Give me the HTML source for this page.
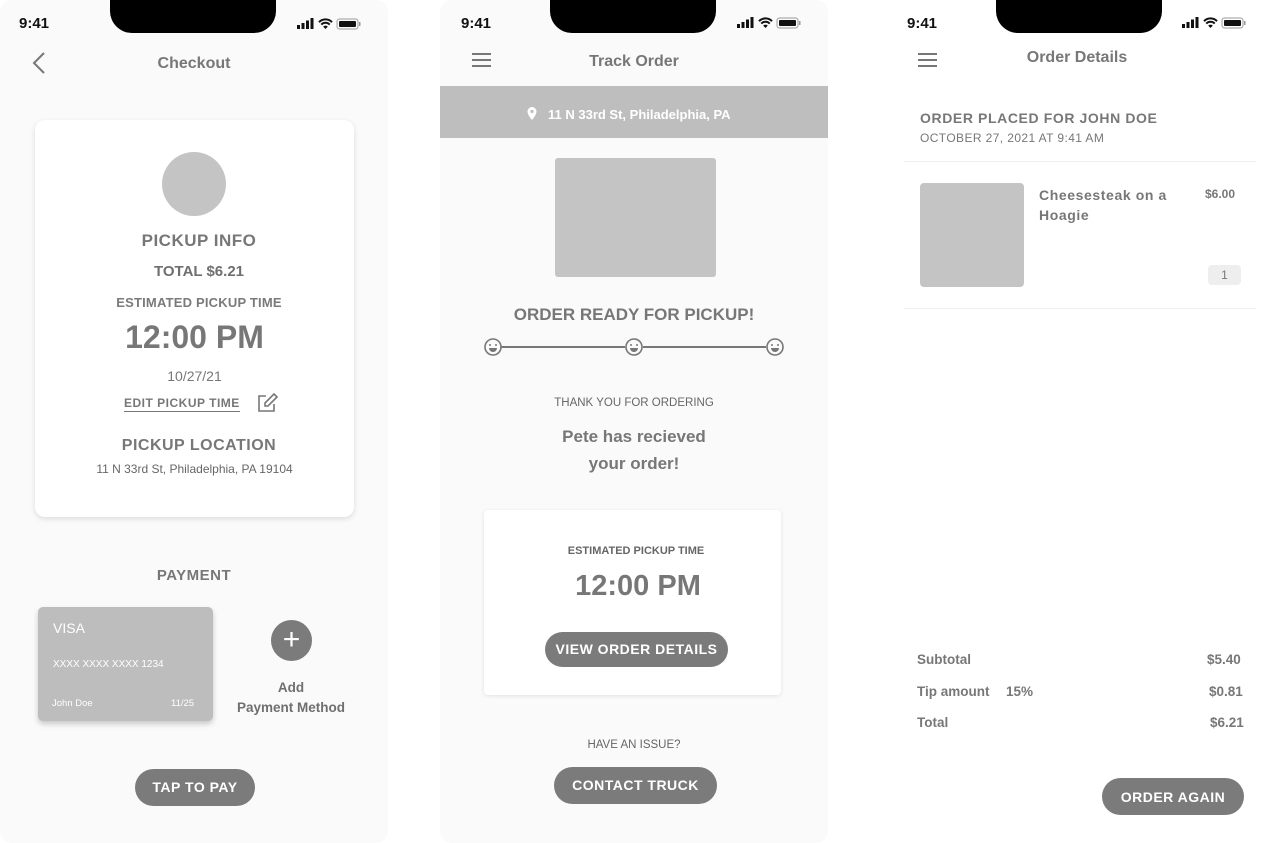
<!DOCTYPE html>
<html><head><meta charset="utf-8"><style>
*{margin:0;padding:0;box-sizing:border-box}
body{width:1274px;height:843px;background:#fff;position:relative;overflow:hidden;font-family:"Liberation Sans",sans-serif;color:#777}
.a{position:absolute}
.c{position:absolute;text-align:center;white-space:nowrap}
.b{font-weight:bold}
.ph{position:absolute;top:0;width:388px;height:843px;border-radius:12px}
.notch{position:absolute;top:0;width:166px;height:33px;background:#000;border-radius:0 0 22px 22px}
.time{position:absolute;top:15px;font-size:15px;font-weight:bold;color:#111}
.btn{position:absolute;background:#7b7b7b;color:#fff;font-weight:bold;border-radius:20px;text-align:center;letter-spacing:.5px}
.ham{position:absolute;width:19px;height:14px;border-top:2px solid #777;border-bottom:2px solid #777}
.ham:after{content:"";position:absolute;left:0;right:0;top:4px;border-top:2px solid #777}
</style></head><body>

<svg width="0" height="0" style="position:absolute"><defs>
<g id="st"><rect x="0" y="7" width="3" height="4" fill="#111"/><rect x="4.5" y="5" width="3" height="6" fill="#111"/><rect x="9" y="2.5" width="3" height="8.5" fill="#111"/><rect x="13.5" y="0" width="3" height="11" fill="#111"/>
<path d="M22 4.2a9 9 0 0 1 13 0M24.3 6.6a5.6 5.6 0 0 1 8.4 0" stroke="#111" stroke-width="2" fill="none"/><path d="M28.5 11l-2.3-2.4a3.2 3.2 0 0 1 4.6 0z" fill="#111"/>
<rect x="40" y="1" width="21" height="10" rx="2.5" stroke="#999" fill="none"/><rect x="42" y="3" width="17" height="6" rx="1" fill="#111"/><rect x="62" y="4" width="1.5" height="4" fill="#999"/></g>
</defs></svg>

<!-- PHONE 1 -->
<div class="ph" style="left:0;background:#fafafa"></div>
<div class="notch" style="left:110px"></div>
<div class="time" style="left:19px">9:41</div>
<svg class="a" style="left:297px;top:18px" width="66" height="12"><use href="#st"/></svg>
<svg class="a" style="left:30px;top:51px" width="16" height="24"><path d="M14 2L4 12l10 10" stroke="#777" stroke-width="2" fill="none"/></svg>
<div class="c b" style="left:0;width:388px;top:55px;font-size:16px">Checkout</div>
<div class="a" style="left:35px;top:120px;width:319px;height:397px;background:#fff;border-radius:10px;box-shadow:0 2px 6px rgba(0,0,0,.12)"></div>
<div class="a" style="left:162px;top:152px;width:64px;height:64px;border-radius:50%;background:#c4c4c4"></div>
<div class="c b" style="left:35px;width:328px;top:231px;font-size:17px;letter-spacing:.5px">PICKUP INFO</div>
<div class="c b" style="left:35px;width:328px;top:263px;font-size:15px;color:#6f6f6f">TOTAL $6.21</div>
<div class="c b" style="left:35px;width:328px;top:295px;font-size:13px;letter-spacing:.2px;color:#7a7a7a">ESTIMATED PICKUP TIME</div>
<div class="c b" style="left:35px;width:319px;top:319px;font-size:32px">12:00 PM</div>
<div class="c" style="left:35px;width:319px;top:368px;font-size:14px">10/27/21</div>
<div class="a b" style="left:124px;top:396px;font-size:12px;letter-spacing:.5px;border-bottom:1.5px solid #777;padding-bottom:1px">EDIT PICKUP TIME</div>
<svg class="a" style="left:256px;top:393px" width="22" height="20"><path d="M10 3H3v15h15v-7" stroke="#777" stroke-width="1.6" fill="none"/><path d="M9 13v-3l9-9 3 3-9 9z" stroke="#777" stroke-width="1.6" fill="none"/></svg>
<div class="c b" style="left:35px;width:328px;top:437px;font-size:16px;letter-spacing:.5px">PICKUP LOCATION</div>
<div class="c" style="left:35px;width:319px;top:462px;font-size:12px;color:#666">11 N 33rd St, Philadelphia, PA 19104</div>
<div class="c b" style="left:0;width:388px;top:567px;font-size:15px;letter-spacing:.5px">PAYMENT</div>
<div class="a" style="left:38px;top:607px;width:175px;height:114px;background:#bdbdbd;border-radius:5px;box-shadow:0 3px 6px rgba(0,0,0,.2)"></div>
<div class="a" style="left:53px;top:620px;color:#fff;font-size:14px">VISA</div>
<div class="a" style="left:53px;top:659px;color:#fff;font-size:10px">XXXX XXXX XXXX 1234</div>
<div class="a" style="left:52px;top:698px;color:#fff;font-size:9.5px">John Doe</div>
<div class="a" style="left:171px;top:698px;color:#fff;font-size:9.5px">11/25</div>
<div class="a" style="left:271px;top:620px;width:41px;height:41px;border-radius:50%;background:#7b7b7b;color:#fff;font-size:30px;line-height:40px;text-align:center">+</div>
<div class="c b" style="left:191px;width:200px;top:678px;font-size:13.5px;line-height:20px;color:#6f6f6f">Add<br>Payment Method</div>
<div class="btn" style="left:135px;top:769px;width:120px;height:37px;line-height:37px;font-size:14px">TAP TO PAY</div>

<!-- PHONE 2 -->
<div class="ph" style="left:440px;background:#fafafa"></div>
<div class="notch" style="left:550px"></div>
<div class="time" style="left:461px">9:41</div>
<svg class="a" style="left:737px;top:17px" width="66" height="12"><use href="#st"/></svg>
<div class="ham" style="left:472px;top:53px"></div>
<div class="c b" style="left:440px;width:388px;top:53px;font-size:16px">Track Order</div>
<div class="a" style="left:440px;top:86px;width:388px;height:52px;background:#bebebe"></div>
<svg class="a" style="left:527px;top:107px" width="10" height="14"><path d="M5 0a4.5 4.5 0 0 0-4.5 4.5C.5 8 5 13 5 13s4.5-5 4.5-8.5A4.5 4.5 0 0 0 5 0z" fill="#fff"/><circle cx="5" cy="4.5" r="1.6" fill="#bebebe"/></svg>
<div class="a b" style="left:548px;top:107px;color:#fff;font-size:13px">11 N 33rd St, Philadelphia, PA</div>
<div class="a" style="left:555px;top:158px;width:161px;height:119px;background:#c4c4c4;border-radius:3px"></div>
<div class="c b" style="left:440px;width:388px;top:305px;font-size:17px">ORDER READY FOR PICKUP!</div>
<svg class="a" style="left:480px;top:335px" width="310" height="24">
<line x1="21" y1="12" x2="145" y2="12" stroke="#777" stroke-width="2"/><line x1="163" y1="12" x2="286" y2="12" stroke="#777" stroke-width="2"/>
<g fill="none" stroke="#777" stroke-width="1.6"><circle cx="13" cy="12" r="8"/><circle cx="154" cy="12" r="8"/><circle cx="295" cy="12" r="8"/></g>
<g fill="#777"><circle cx="10" cy="10" r="1"/><circle cx="16" cy="10" r="1"/><path d="M9 13h8a4 4 0 0 1-8 0z"/><circle cx="151" cy="10" r="1"/><circle cx="157" cy="10" r="1"/><path d="M150 13h8a4 4 0 0 1-8 0z"/><circle cx="292" cy="10" r="1"/><circle cx="298" cy="10" r="1"/><path d="M291 13h8a4 4 0 0 1-8 0z"/></g></svg>
<div class="c" style="left:440px;width:388px;top:397px;font-size:11.5px;color:#666">THANK YOU FOR ORDERING</div>
<div class="c b" style="left:440px;width:388px;top:423px;font-size:17px;line-height:27px">Pete has recieved<br>your order!</div>
<div class="a" style="left:484px;top:510px;width:297px;height:185px;background:#fff;border-radius:4px;box-shadow:0 1px 4px rgba(0,0,0,.1)"></div>
<div class="c b" style="left:484px;width:304px;top:545px;font-size:11px;color:#666">ESTIMATED PICKUP TIME</div>
<div class="c b" style="left:484px;width:308px;top:570px;font-size:29px">12:00 PM</div>
<div class="btn" style="left:545px;top:632px;width:183px;height:35px;line-height:35px;font-size:14px">VIEW ORDER DETAILS</div>
<div class="c" style="left:440px;width:388px;top:739px;font-size:11.5px;color:#666">HAVE AN ISSUE?</div>
<div class="btn" style="left:554px;top:767px;width:163px;height:37px;line-height:37px;font-size:14px">CONTACT TRUCK</div>

<!-- PHONE 3 -->
<div class="notch" style="left:996px"></div>
<div class="time" style="left:907px">9:41</div>
<svg class="a" style="left:1182px;top:17px" width="66" height="12"><use href="#st"/></svg>
<div class="ham" style="left:918px;top:53px"></div>
<div class="c b" style="left:882px;width:390px;top:49px;font-size:16px">Order Details</div>
<div class="a b" style="left:920px;top:110px;font-size:14px;letter-spacing:.6px">ORDER PLACED FOR JOHN DOE</div>
<div class="a" style="left:920px;top:131px;font-size:12px;letter-spacing:.4px">OCTOBER 27, 2021 AT 9:41 AM</div>
<div class="a" style="left:904px;top:161px;width:352px;border-top:1px solid #eee"></div>
<div class="a" style="left:920px;top:183px;width:104px;height:104px;background:#c4c4c4;border-radius:4px"></div>
<div class="a b" style="left:1039px;top:185px;font-size:14px;line-height:20px;letter-spacing:.6px">Cheesesteak on a<br>Hoagie</div>
<div class="a b" style="left:1205px;top:187px;font-size:12px">$6.00</div>
<div class="a" style="left:1208px;top:265px;width:33px;height:20px;background:#eee;border-radius:4px;font-size:12px;text-align:center;line-height:20px">1</div>
<div class="a" style="left:904px;top:308px;width:352px;border-top:1px solid #eee"></div>
<div class="a b" style="left:917px;top:652px;font-size:13.5px">Subtotal</div>
<div class="a b" style="left:1207px;top:652px;font-size:13.5px">$5.40</div>
<div class="a b" style="left:917px;top:684px;font-size:13.5px">Tip amount</div>
<div class="a b" style="left:1006px;top:684px;font-size:13.5px">15%</div>
<div class="a b" style="left:1209px;top:684px;font-size:13.5px">$0.81</div>
<div class="a b" style="left:917px;top:715px;font-size:13.5px">Total</div>
<div class="a b" style="left:1210px;top:715px;font-size:13.5px">$6.21</div>
<div class="btn" style="left:1102px;top:778px;width:142px;height:37px;line-height:39px;font-size:14px">ORDER AGAIN</div>
</body></html>
